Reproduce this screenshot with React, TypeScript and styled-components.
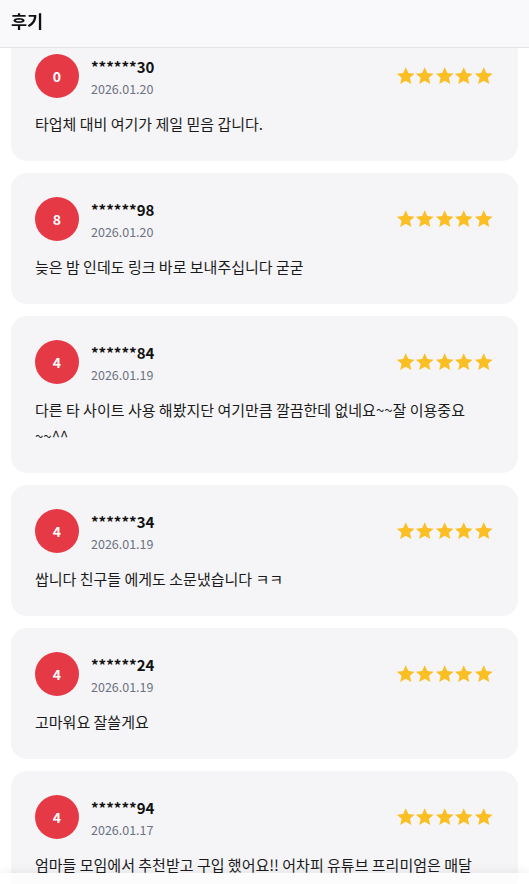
import React from "react";
import styled, { createGlobalStyle } from "styled-components";

const Global = createGlobalStyle`
  html, body { margin: 0; padding: 0; background: #ffffff; }
  body { font-family: "Noto Sans CJK KR", "Noto Sans", sans-serif; color: #111111; }
  * { box-sizing: border-box; }
`;

const Header = styled.header`
  position: fixed;
  top: 0;
  left: 0;
  right: 0;
  height: 48px;
  display: flex;
  align-items: center;
  padding: 0 11px 6px;
  background: rgba(249, 249, 251, 0.97);
  border-bottom: 1px solid #e4e5e9;
  z-index: 10;
`;

const Title = styled.h1`
  margin: 0;
  font-size: 17.5px;
  font-weight: 700;
  color: #111111;
`;

const List = styled.main`
  display: flex;
  flex-direction: column;
  gap: 12px;
  padding: 30px 11px 40px;
`;

const Card = styled.article`
  background: #f5f5f7;
  border-radius: 16px;
  padding: 24px;
`;

const Top = styled.div`
  display: flex;
  align-items: center;
  height: 44px;
`;

const Avatar = styled.div`
  width: 44px;
  height: 44px;
  border-radius: 50%;
  background: #e63946;
  color: #ffffff;
  display: flex;
  align-items: center;
  justify-content: center;
  font-size: 14px;
  font-weight: 700;
  flex-shrink: 0;
`;

const Meta = styled.div`
  display: flex;
  flex-direction: column;
  margin-left: 12px;
  padding-top: 3px;
  flex: 1;
  gap: 3px;
`;

const Name = styled.span`
  font-size: 15px;
  font-weight: 700;
  line-height: 20px;
  color: #111111;
`;

const DateText = styled.span`
  font-size: 12.5px;
  line-height: 18px;
  color: #6b7280;
`;

const Stars = styled.div`
  display: flex;
  gap: 0;
  margin-right: 1px;
`;

const Comment = styled.p`
  margin: 13px 0 0;
  padding-right: 8px;
  font-size: 15px;
  line-height: 26px;
  color: #1a1a1a;
  word-break: keep-all;
`;

const BottomFade = styled.div`
  position: fixed;
  left: 0;
  right: 0;
  bottom: 0;
  height: 11px;
  background: rgba(255, 255, 255, 0.65);
  box-shadow: 0 -3px 8px rgba(0, 0, 0, 0.05);
  z-index: 10;
`;

const Star = () => (
  <svg width="19.5" height="19.5" viewBox="0 0 24 24" aria-hidden="true">
    <path
      d="M12 1.5l3.2 7.1 7.7.8-5.8 5.2 1.7 7.6L12 18.3l-6.8 3.9 1.7-7.6-5.8-5.2 7.7-.8z"
      fill="#fbbf24"
    />
  </svg>
);

const reviews = [
  { a: "0", name: "******30", date: "2026.01.20", text: "타업체 대비 여기가 제일 믿음 갑니다." },
  { a: "8", name: "******98", date: "2026.01.20", text: "늦은 밤 인데도 링크 바로 보내주십니다 굳굳" },
  { a: "4", name: "******84", date: "2026.01.19", text: "다른 타 사이트 사용 해봤지단 여기만큼 깔끔한데 없네요~~잘 이용중요~~^^" },
  { a: "4", name: "******34", date: "2026.01.19", text: "쌉니다 친구들 에게도 소문냈습니다 ㅋㅋ" },
  { a: "4", name: "******24", date: "2026.01.19", text: "고마워요 잘쓸게요" },
  {
    a: "4",
    name: "******94",
    date: "2026.01.17",
    text: "엄마들 모임에서 추천받고 구입 했어요!! 어차피 유튜브 프리미엄은 매달 돈 나가는 데 너무 저렴한 가격이어서 모임도 이해하고 편하네요",
  },
];

export default function App() {
  return (
    <>
      <Global />
      <Header>
        <Title>후기</Title>
      </Header>
      <List>
        {reviews.map((r, i) => (
          <Card key={i}>
            <Top>
              <Avatar>{r.a}</Avatar>
              <Meta>
                <Name>{r.name}</Name>
                <DateText>{r.date}</DateText>
              </Meta>
              <Stars>
                <Star />
                <Star />
                <Star />
                <Star />
                <Star />
              </Stars>
            </Top>
            <Comment>{r.text}</Comment>
          </Card>
        ))}
      </List>
      <BottomFade />
    </>
  );
}
